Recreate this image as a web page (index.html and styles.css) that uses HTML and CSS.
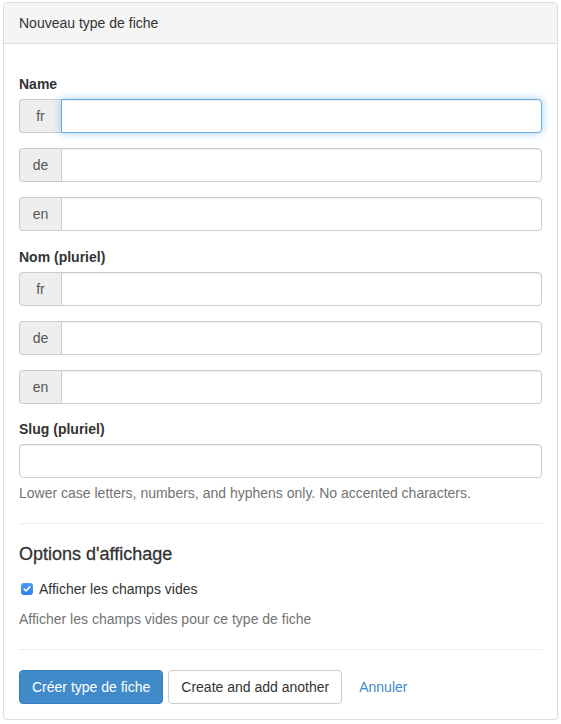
FILE: index.html
```html
<!DOCTYPE html>
<html lang="fr">
<head>
<meta charset="utf-8">
<title>Nouveau type de fiche</title>
<link rel="stylesheet" href="styles.css">
</head>
<body>
<div class="panel">
  <div class="panel-heading">Nouveau type de fiche</div>
  <div class="panel-body">
    <form class="form">
      <div class="form-group first">
        <label class="control-label">Name</label>
        <div class="input-group"><span class="addon">fr</span><input class="form-control is-focus" type="text"></div>
        <div class="input-group"><span class="addon">de</span><input class="form-control" type="text"></div>
        <div class="input-group"><span class="addon">en</span><input class="form-control" type="text"></div>
      </div>
      <div class="form-group">
        <label class="control-label">Nom (pluriel)</label>
        <div class="input-group"><span class="addon">fr</span><input class="form-control" type="text"></div>
        <div class="input-group"><span class="addon">de</span><input class="form-control" type="text"></div>
        <div class="input-group"><span class="addon">en</span><input class="form-control" type="text"></div>
      </div>
      <div class="form-group slug">
        <label class="control-label">Slug (pluriel)</label>
        <input class="form-control full" type="text">
        <p class="help-block">Lower case letters, numbers, and hyphens only. No accented characters.</p>
      </div>
      <hr class="sep">
      <h4 class="section-title">Options d'affichage</h4>
      <div class="checkbox">
        <label><span class="check"><svg width="12" height="12" viewBox="0 0 12 12"><path d="M3.2 6.2 L5.1 8 L8.8 3.9" fill="none" stroke="#fff" stroke-width="1.6" stroke-linecap="round" stroke-linejoin="round"/></svg></span>Afficher les champs vides</label>
      </div>
      <p class="help-block help-opt">Afficher les champs vides pour ce type de fiche</p>
      <hr class="sep sep2">
      <div class="actions">
        <button type="button" class="btn btn-primary">Créer type de fiche</button>
        <button type="button" class="btn btn-default">Create and add another</button>
        <a class="btn btn-link" href="#">Annuler</a>
      </div>
    </form>
  </div>
</div>
</body>
</html>
```

FILE: styles.css
```css
* { box-sizing: border-box; }
html, body { margin: 0; padding: 0; background: #fff; }
body {
  font-family: "Liberation Sans", Arial, Helvetica, sans-serif;
  font-size: 14px;
  line-height: 20px;
  color: #333;
}
.panel {
  margin: 2px 3px 0;
  border: 1px solid #ddd;
  border-radius: 4px;
  background: #fff;
  box-shadow: 0 1px 1px rgba(0,0,0,.05);
}
.panel-heading {
  padding: 10px 15px;
  background: #f5f5f5;
  border-bottom: 1px solid #ddd;
  border-radius: 3px 3px 0 0;
  color: #333;
}
.panel-body { padding: 15px; }
.form { padding-top: 15px; }
.form-group { margin-bottom: 15px; }
.form-group.first { margin-bottom: 16px; }
.control-label {
  display: block;
  font-weight: bold;
  margin-bottom: 5px;
}
.input-group {
  display: flex;
  height: 34px;
  margin-bottom: 15px;
}
.form-group .input-group:last-child { margin-bottom: 0; }
.addon {
  flex: 0 0 42px;
  display: flex;
  align-items: center;
  justify-content: center;
  background: #eee;
  border: 1px solid #ccc;
  border-right: 0;
  border-radius: 4px 0 0 4px;
  color: #555;
  font-size: 14px;
}
.form-control {
  flex: 1;
  min-width: 0;
  height: 34px;
  padding: 6px 12px;
  font: inherit;
  color: #555;
  background: #fff;
  border: 1px solid #ccc;
  border-radius: 0 4px 4px 0;
  box-shadow: inset 0 1px 1px rgba(0,0,0,.075);
  outline: none;
}
.form-control.full {
  display: block;
  width: 100%;
  border-radius: 4px;
}
.form-control.is-focus {
  border-color: #66afe9;
  box-shadow: inset 0 1px 1px rgba(0,0,0,.075), 0 0 8px rgba(102,175,233,.6);
}
.help-block {
  margin: 5px 0 0;
  color: #737373;
}
.sep {
  border: 0;
  border-top: 1px solid #eee;
  margin: 20px 0 0;
}
.section-title {
  margin: 21px 0 0;
  font-size: 18px;
  font-weight: 500;
  line-height: 1.1;
  color: #333;
  -webkit-text-stroke: 0.3px #333;
}
.checkbox { margin-top: 14px; }
.checkbox label {
  display: flex;
  align-items: center;
  min-height: 20px;
  padding-left: 2px;
}
.check {
  flex: 0 0 12px;
  width: 12px;
  height: 12px;
  margin-right: 6px;
  border-radius: 3px;
  background: linear-gradient(#4c9cf8, #2f7ef0);
  display: flex;
}
.help-opt { margin-top: 10px; }
.sep2 { margin-top: 20px; }
.actions {
  display: flex;
  align-items: center;
  gap: 5px;
  margin-top: 20px;
}
.btn {
  display: inline-block;
  height: 34px;
  padding: 6px 12px;
  font: inherit;
  line-height: 20px;
  border: 1px solid transparent;
  border-radius: 4px;
  text-decoration: none;
  cursor: pointer;
}
.btn-primary {
  background: #428bca;
  border-color: #357ebd;
  color: #fff;
}
.btn-default {
  background: #fff;
  border-color: #ccc;
  color: #333;
}
.btn-link {
  color: #428bca;
  padding-left: 11px;
}
```
